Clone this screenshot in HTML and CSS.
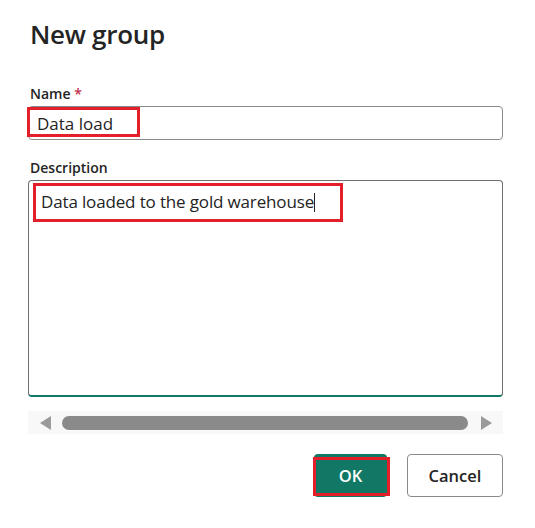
FILE: index.html
```html
<!DOCTYPE html>
<html lang="en">
<head>
<meta charset="utf-8">
<title>New group</title>
<link rel="stylesheet" href="styles.css">
</head>
<body>
<div class="dialog">
  <h1 class="title">New group</h1>
  <div class="field field-name">
    <label class="label">Name <span class="req">*</span></label>
    <div class="input">
      <span class="value">Data load</span>
      <span class="mark mark-name"></span>
    </div>
  </div>
  <div class="field field-desc">
    <label class="label">Description</label>
    <div class="textarea">
      <span class="value value-desc">Data loaded to the gold warehouse</span><span class="caret"></span>
      <span class="mark mark-desc"></span>
    </div>
  </div>
  <div class="scrollbar">
    <span class="arrow arrow-left"></span>
    <span class="thumb"></span>
    <span class="arrow arrow-right"></span>
  </div>
  <div class="actions">
    <button class="btn btn-primary">OK<span class="mark mark-ok"></span></button>
    <button class="btn btn-secondary">Cancel</button>
  </div>
</div>
</body>
</html>
```
FILE: styles.css
```css
* { box-sizing: border-box; }
html, body { margin: 0; padding: 0; background: #ffffff; }
body {
  font-family: "Open Sans", "Noto Sans", sans-serif;
  color: #242424;
}
.dialog {
  width: 535px;
  padding: 16px 32px 0 28px;
}
.title {
  margin: 0 0 0 2px;
  font-size: 26px;
  font-weight: 600;
  line-height: 36px;
  letter-spacing: -0.3px;
}
.field { display: flex; flex-direction: column; }
.field-name { margin-top: 32px; }
.field-desc { margin-top: 18px; }
.label {
  margin-left: 2px;
  font-size: 14px;
  font-weight: 600;
  line-height: 20px;
  color: #242424;
}
.req { color: #c4314b; }
.input {
  position: relative;
  margin-top: 2px;
  height: 34px;
  border: 1px solid #8a8a8a;
  border-radius: 4px;
  padding: 0 8px;
  display: flex;
  align-items: center;
  font-size: 17px;
}
.textarea {
  position: relative;
  margin-top: 2px;
  height: 217px;
  border: 1px solid #6e6e6e;
  border-bottom: 2px solid #117865;
  border-radius: 4px;
  padding: 8px 12px;
  font-size: 17px;
  line-height: 26px;
}
.value-desc { letter-spacing: -0.15px; }
.caret {
  display: inline-block;
  width: 1px;
  height: 19px;
  background: #242424;
  vertical-align: -4px;
}
.mark {
  position: absolute;
  border: 3px solid #e3202a;
  pointer-events: none;
}
.mark-name { left: -2px; top: 0px; width: 113px; height: 30px; }
.mark-desc { left: 4px; top: 2px; width: 310px; height: 39px; }
.scrollbar {
  margin-top: 14px;
  height: 23px;
  background: #f8f8f8;
  display: flex;
  align-items: center;
  padding: 0 11px 0 12px;
  gap: 11px;
}
.arrow {
  width: 0; height: 0;
  border-top: 7px solid transparent;
  border-bottom: 7px solid transparent;
}
.arrow-left { border-right: 11px solid #9a9a9a; }
.arrow-right { border-left: 11px solid #9a9a9a; }
.thumb {
  flex: 1;
  height: 14px;
  border-radius: 7px;
  background: #8a8a8a;
  margin-right: 2px;
}
.actions {
  margin-top: 20px;
  display: flex;
  justify-content: flex-end;
  gap: 20px;
}
.btn {
  position: relative;
  height: 43px;
  border-radius: 4px;
  font-family: "Open Sans", "Noto Sans", sans-serif;
  font-size: 16.5px;
  font-weight: 600;
  padding: 0;
}
.btn-primary {
  width: 73px;
  background: #117865;
  color: #ffffff;
  border: none;
}
.btn-secondary {
  width: 96px;
  background: #ffffff;
  color: #242424;
  border: 1px solid #8a8a8a;
}
.mark-ok { left: -1px; top: 3px; width: 77px; height: 39px; }
```
